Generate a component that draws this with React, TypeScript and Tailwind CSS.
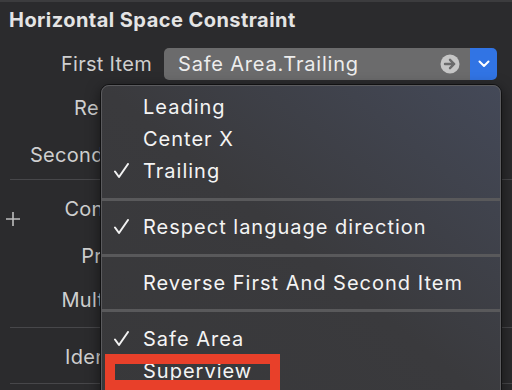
const font = { fontFamily: 'Inter, "Noto Sans", sans-serif' }

function Check() {
  return (
    <svg width="16" height="16" viewBox="0 0 16 16" className="absolute left-[11px] top-1/2 -translate-y-1/2">
      <path d="M2 8.5 L6 14 L15 1" fill="none" stroke="#f2f2f2" strokeWidth="2" strokeLinecap="round" strokeLinejoin="round" />
    </svg>
  )
}

function MenuRow({ label, checked }: { label: string; checked?: boolean }) {
  return (
    <div className="relative h-[32px] flex items-center pl-[41px] text-[20px] tracking-[1px] text-[#f4f4f4]">
      {checked && <Check />}
      {label}
    </div>
  )
}

function Sep({ cls }: { cls: string }) {
  return <div className={`${cls} h-[3px] bg-[#59595b]`} />
}

// labels sit under the open menu, so only their left part shows
function Label({ text, mt }: { text: string; mt: string }) {
  return (
    <div className={`h-[32px] w-[100px] overflow-hidden flex items-center ${mt}`}>
      <div className="w-[152px] shrink-0 text-right whitespace-nowrap text-[20px] tracking-[0.3px] text-[#cfcfcf]">{text}</div>
    </div>
  )
}

export default function App() {
  return (
    <div className="relative w-[512px] h-[390px] overflow-hidden bg-[#2b2b2d] border-t-2 border-[#3c3c3e]" style={font}>
      <div className="h-[36px] flex items-center pl-[9px] text-[20px] font-bold tracking-[0.45px] text-[#e4e4e4]">
        Horizontal Space Constraint
      </div>

      <div className="h-[32px] mt-[10px] flex items-center">
        <div className="w-[152px] text-right text-[20px] tracking-[0.3px] text-[#cfcfcf]">First Item</div>
        <div className="ml-[12px] w-[333px] h-[32px] flex rounded-[5px] overflow-hidden">
          <div className="flex-1 flex items-center justify-between pl-[14px] pr-[10px] bg-[#6b6b6c] text-[20px] tracking-[0.8px] text-[#ededed]">
            <span>Safe Area.Trailing</span>
            <svg width="20" height="20" viewBox="0 0 20 20">
              <circle cx="10" cy="10" r="9.5" fill="#c6c6c6" />
              <path d="M5 10 H14 M10 5.8 L14.2 10 L10 14.2" fill="none" stroke="#6b6b6c" strokeWidth="2.4" strokeLinecap="round" strokeLinejoin="round" />
            </svg>
          </div>
          <div className="w-[27px] flex items-center justify-center bg-[#3174e4]">
            <svg width="12" height="8" viewBox="0 0 12 8">
              <path d="M1.5 1.5 L6 6 L10.5 1.5" fill="none" stroke="#ffffff" strokeWidth="2" strokeLinecap="round" strokeLinejoin="round" />
            </svg>
          </div>
        </div>
      </div>

      <Label text="Relation" mt="mt-[12px]" />
      <Label text="Second Item" mt="mt-[15px]" />
      <div className="mt-[8px] ml-[10px] h-px bg-[#47474a]" />
      <div className="relative">
        <svg width="14" height="14" viewBox="0 0 14 14" className="absolute left-[6px] top-[19px]">
          <path d="M7 0 V14 M0 7 H14" stroke="#bdbdbd" strokeWidth="1.6" />
        </svg>
        <Label text="Constant" mt="mt-[13px]" />
      </div>
      <Label text="Priority" mt="mt-[15px]" />
      <Label text="Multiplier" mt="mt-[12px]" />
      <div className="mt-[11px] ml-[10px] h-px bg-[#47474a]" />
      <Label text="Identifier" mt="mt-[13px]" />
      <div className="mt-[10px] ml-[10px] h-px bg-[#47474a]" />

      {/* dropdown menu */}
      <div className="absolute left-[100px] top-[82px] w-[402px] h-[330px] rounded-[9px] border border-[#111112] bg-gradient-to-bl from-[#444958] via-[#3a3a3d] to-[#38383a] shadow-[0_4px_14px_rgba(0,0,0,0.5)]">
        <div className="h-full rounded-[8px] border border-[#5b5b5e] pt-[5px]">
          <MenuRow label="Leading" />
          <MenuRow label="Center X" />
          <MenuRow label="Trailing" checked />
          <Sep cls="mt-[11px] mb-[10px]" />
          <MenuRow label="Respect language direction" checked />
          <Sep cls="mt-[11px] mb-[10px]" />
          <MenuRow label="Reverse First And Second Item" />
          <Sep cls="mt-[10px] mb-[11px]" />
          <MenuRow label="Safe Area" checked />
          <MenuRow label="Superview" />
        </div>
      </div>

      {/* annotation */}
      <div className="absolute left-[105px] top-[352px] w-[175px] h-[38px] border-[10px] border-b-[12px] border-[#e8402a]" />
    </div>
  )
}
